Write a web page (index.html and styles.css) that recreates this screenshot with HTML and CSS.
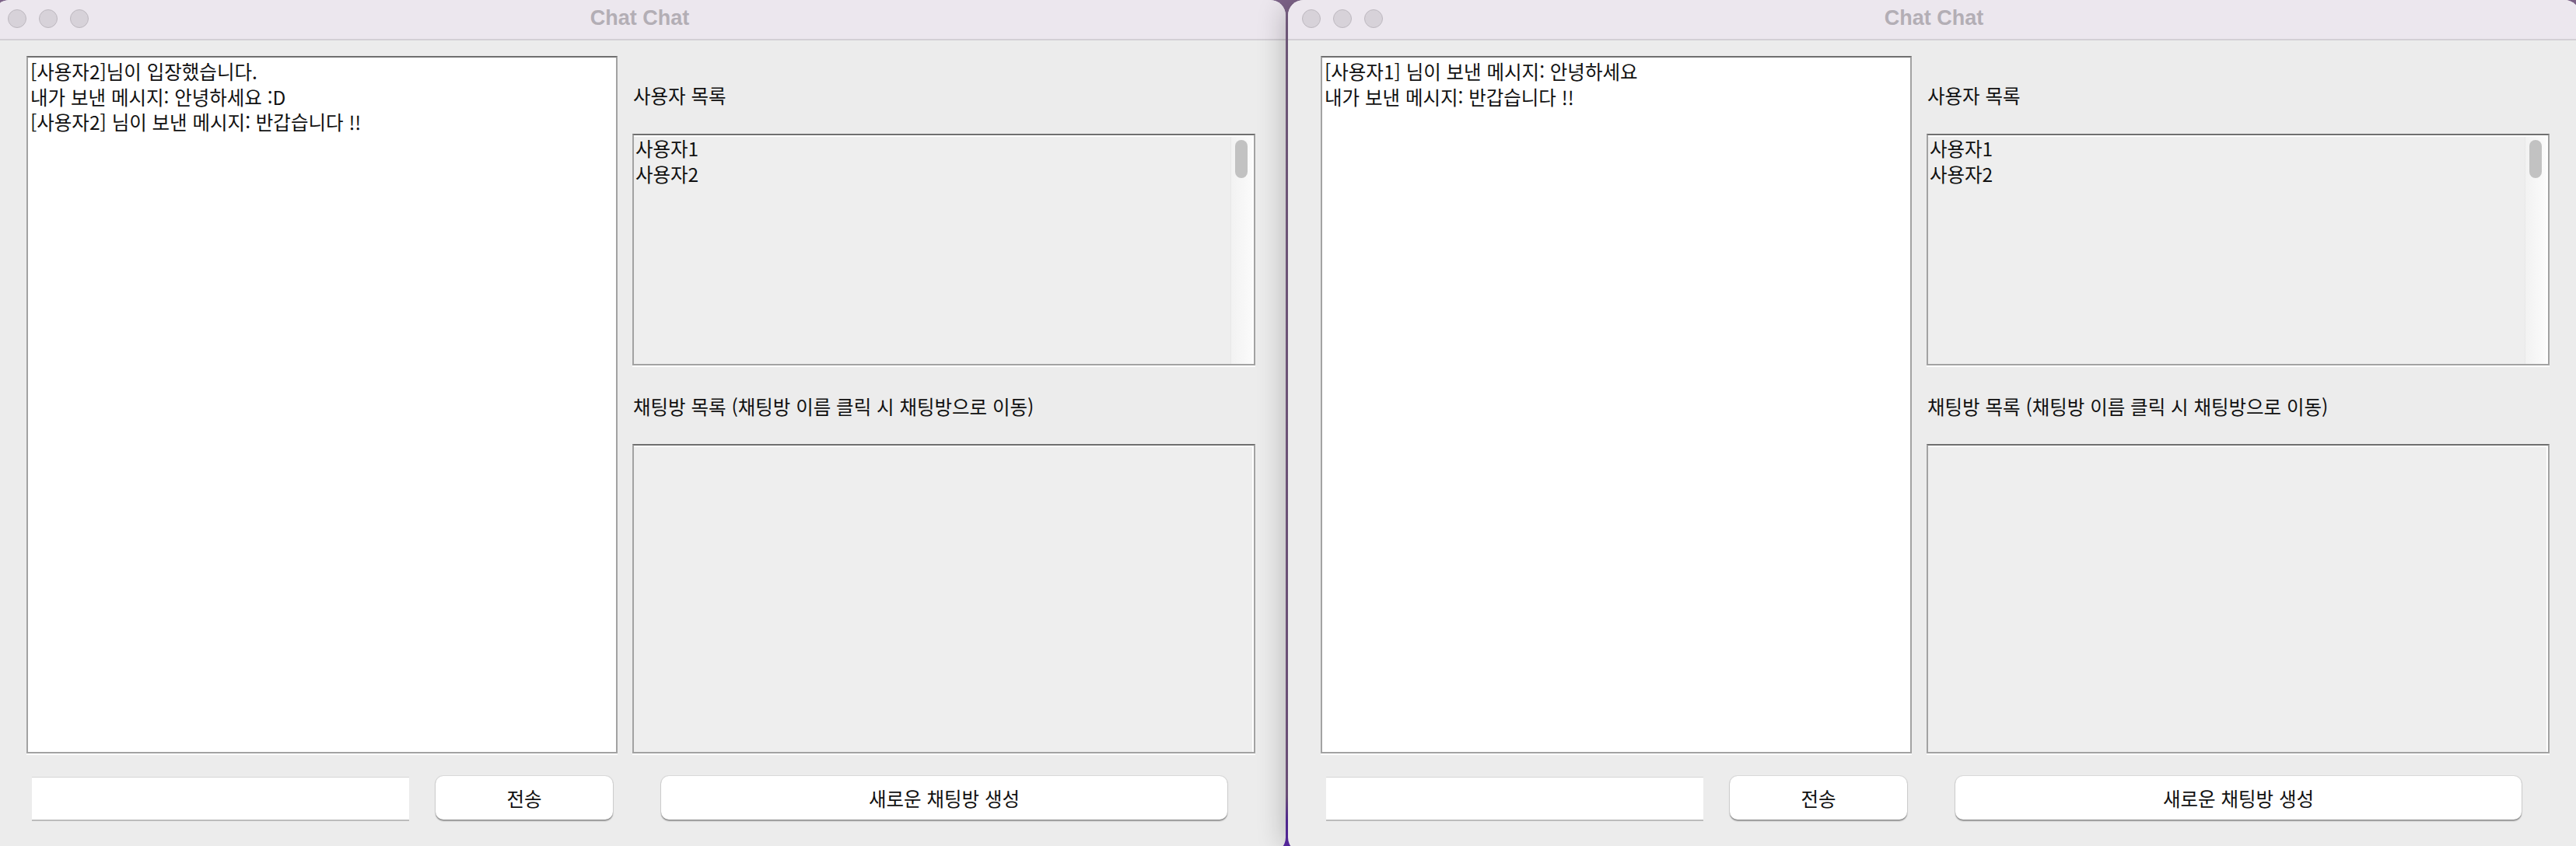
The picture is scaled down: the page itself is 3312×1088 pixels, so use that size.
FILE: index.html
```html
<!DOCTYPE html>
<html lang="ko">
<head>
<meta charset="utf-8">
<title>Chat Chat</title>
<link rel="stylesheet" href="styles.css">
</head>
<body>
<div class="desktop">
  <section class="window w1">
    <header class="titlebar">
      <div class="lights"><span class="light"></span><span class="light"></span><span class="light"></span></div>
      <div class="title">Chat Chat</div>
      <div></div>
    </header>
    <div class="content">
      <div class="main">
        <div class="chatlog pane">
          <div class="line">[사용자2]님이 입장했습니다.</div>
          <div class="line">내가 보낸 메시지: 안녕하세요 :D</div>
          <div class="line">[사용자2] 님이 보낸 메시지: 반갑습니다 !!</div>
        </div>
        <div class="side">
          <div class="label label-users">사용자 목록</div>
          <div class="list users pane">
            <div class="items"><div>사용자1</div><div>사용자2</div></div>
            <div class="scrolltrack"><div class="thumb"></div></div>
          </div>
          <div class="label label-rooms">채팅방 목록 (채팅방 이름 클릭 시 채팅방으로 이동)</div>
          <div class="list rooms pane"></div>
        </div>
      </div>
      <div class="bottom">
        <div class="input"></div>
        <button class="btn send">전송</button>
        <button class="btn create">새로운 채팅방 생성</button>
      </div>
    </div>
  </section>
  <section class="window w2">
    <header class="titlebar">
      <div class="lights"><span class="light"></span><span class="light"></span><span class="light"></span></div>
      <div class="title">Chat Chat</div>
      <div></div>
    </header>
    <div class="content">
      <div class="main">
        <div class="chatlog pane">
          <div class="line">[사용자1] 님이 보낸 메시지: 안녕하세요</div>
          <div class="line">내가 보낸 메시지: 반갑습니다 !!</div>
        </div>
        <div class="side">
          <div class="label label-users">사용자 목록</div>
          <div class="list users pane">
            <div class="items"><div>사용자1</div><div>사용자2</div></div>
            <div class="scrolltrack"><div class="thumb"></div></div>
          </div>
          <div class="label label-rooms">채팅방 목록 (채팅방 이름 클릭 시 채팅방으로 이동)</div>
          <div class="list rooms pane"></div>
        </div>
      </div>
      <div class="bottom">
        <div class="input"></div>
        <button class="btn send">전송</button>
        <button class="btn create">새로운 채팅방 생성</button>
      </div>
    </div>
  </section>
</div>
</body>
</html>
```
FILE: styles.css
```css
* { box-sizing: border-box; }
html, body { margin: 0; padding: 0; }
body {
  width: 3312px;
  height: 1088px;
  overflow: hidden;
  background: #7a5b86;
  font-family: "Noto Sans CJK KR", "Noto Sans", sans-serif;
  font-size: 24.5px;
  color: #111;
}
.desktop {
  display: flex;
  gap: 3px;
  margin-left: -8px;
  width: 3330px;
  height: 1088px;
  background: linear-gradient(180deg, #7d6388 0%, #7a5a88 94%, #5b2ca3 97%, #5a28a5 100%);
}
.window {
  flex: 0 0 1661px;
  height: 1097px;
  background: #ececec;
  border-radius: 20px;
  overflow: hidden;
}
.w2 {
  position: relative;
  z-index: 1;
  box-shadow: -14px 0 34px -8px rgba(0, 0, 0, 0.22);
}
.titlebar {
  height: 52px;
  background: #ece7ee;
  border-bottom: 2px solid #d3cfd5;
  display: grid;
  grid-template-columns: 1fr auto 1fr;
  align-items: center;
}
.lights {
  display: flex;
  gap: 16px;
  padding-left: 18px;
  padding-bottom: 2px;
}
.light {
  width: 24px;
  height: 24px;
  border-radius: 50%;
  background: #d7d2d9;
  border: 1px solid #bdb8bf;
}
.title {
  font-family: "Liberation Sans", Arial, sans-serif;
  font-weight: 700;
  font-size: 27px;
  color: #b3aeb5;
  padding-bottom: 3px;
}
.content {
  padding: 20px 39px 0 42px;
}
.main {
  display: flex;
  gap: 19px;
  height: 897px;
}
.pane {
  border: 2px solid #a2a2a2;
  border-top-color: #6f6f6f;
  box-shadow: 0 2px 0 #fff;
}
.chatlog {
  width: 760px;
  background: #fff;
  padding: 2px 3px 0;
  line-height: 32.5px;
}
.side {
  width: 801px;
  display: flex;
  flex-direction: column;
}
.label {
  display: flex;
  align-items: center;
  padding-left: 1px;
}
.label-users { height: 100px; }
.label-rooms { height: 101px; padding-top: 4px; }
.list {
  background: #eeeeee;
  box-shadow: inset 0 2px 0 #fff, inset -2px 0 0 #fff, 0 2px 0 #fff;
  display: flex;
}
.users { height: 298px; }
.rooms { flex: 1; }
.items {
  flex: 1;
  padding: 1px 2px;
  line-height: 32.5px;
}
.scrolltrack {
  width: 28px;
  margin: 2px 2px 0 0;
  background: linear-gradient(90deg, #f2f2f2, #fbfbfb);
  border-left: 1px solid #e8e8e8;
  padding: 4px 0 0 5px;
}
.thumb {
  width: 16px;
  height: 49px;
  border-radius: 8px;
  background: #c2c2c2;
}
.bottom {
  display: flex;
  align-items: center;
  margin-top: 29px;
  padding-left: 7px;
}
.input {
  width: 485px;
  height: 55px;
  margin-top: 1px;
  background: #fff;
  border-top: 1px solid #d6d6d6;
  box-shadow: 0 2px 0 #bcbcbc, -1px 0 0 #ececec;
}
.btn {
  height: 56px;
  border: none;
  border-radius: 10px;
  background: #fff;
  font: inherit;
  color: #111;
  box-shadow: 0 0 0 1px rgba(0, 0, 0, 0.07), 0 1.5px 1.5px rgba(0, 0, 0, 0.35);
  padding: 0;
}
.send { width: 228px; margin-left: 34px; }
.create { width: 728px; margin-left: 62px; }
```
